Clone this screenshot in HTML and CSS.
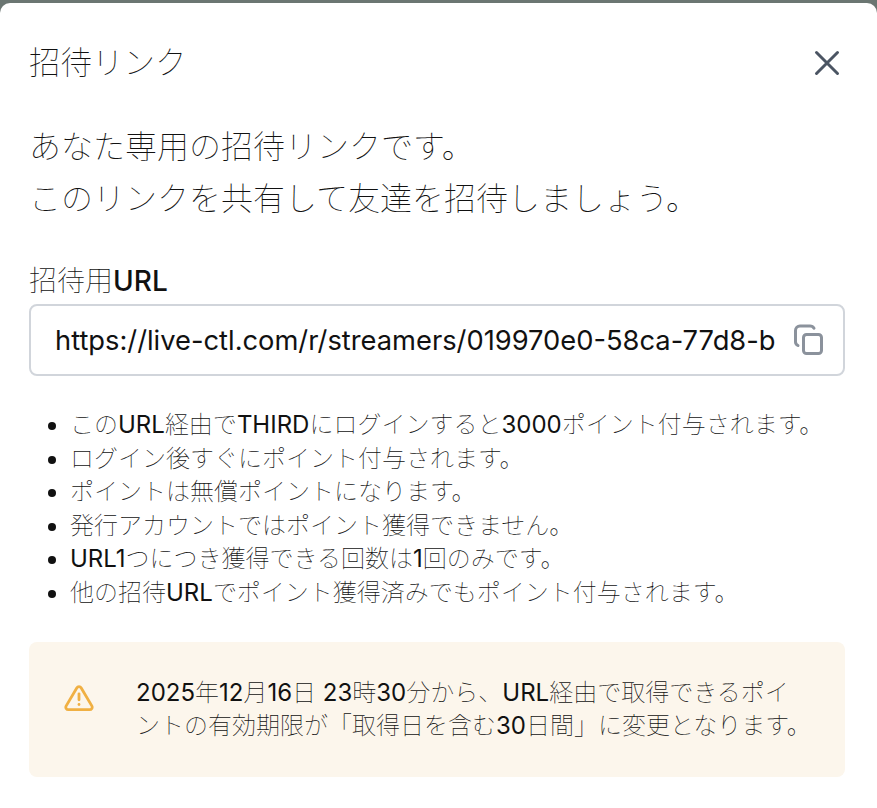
FILE: index.html
```html
<!DOCTYPE html>
<html lang="ja">
<head>
    <meta charset="UTF-8">
    <meta name="viewport" content="width=device-width, initial-scale=1.0">
    <title>招待リンク</title>
    <link rel="stylesheet" href="styles.css">
</head>
<body>
    <div class="modal">
        <div class="modal-header">
            <h2 class="modal-title">招待リンク</h2>
            <button class="close-btn" aria-label="閉じる">
                <svg width="36" height="36" viewBox="0 0 36 36" fill="none" stroke="#4b5563" stroke-width="3" stroke-linecap="round">
                    <path d="M7.500 7.500L28.500 28.500M28.500 7.500L7.500 28.500"/>
                </svg>
            </button>
        </div>
        <p class="lead">あなた専用の招待リンクです。<br>このリンクを共有して友達を招待しましょう。</p>
        <label class="url-label">招待用<span class="en-strong">URL</span></label>
        <div class="url-box">
            <span class="url-text">https://live-ctl.com/r/streamers/019970e0-58ca-77d8-b</span>
            <svg class="copy-icon" width="32" height="32" viewBox="0 0 32 32" fill="none" stroke="#8b929c" stroke-width="3" stroke-linejoin="round" stroke-linecap="round">
                <rect x="10.5" y="10.5" width="18" height="19" rx="3"/>
                <path d="M5 21.5C3.6 20.8 2.500 19.500 2.500 18V6.500C2.500 4 4.500 2 7 2H17C18.800 2 20.200 2.800 21 4.200"/>
            </svg>
        </div>
        <ul class="notes">
            <li>この<span class="en">URL</span>経由で<span class="en">THIRD</span>にログインすると<span class="en">3000</span>ポイント付与されます。</li>
            <li>ログイン後すぐにポイント付与されます。</li>
            <li>ポイントは無償ポイントになります。</li>
            <li>発行アカウントではポイント獲得できません。</li>
            <li><span class="en">URL1</span>つにつき獲得できる回数は<span class="en">1</span>回のみです。</li>
            <li>他の招待<span class="en">URL</span>でポイント獲得済みでもポイント付与されます。</li>
        </ul>
        <div class="alert">
            <svg class="alert-icon" width="30" height="26" viewBox="0 0 32 28" fill="none" stroke="#f0b043" stroke-width="3" stroke-linecap="round" stroke-linejoin="round">
                <path d="M13.600 3.200C14.700 1.300 17.300 1.300 18.400 3.200L29.800 22.500C30.900 24.400 29.600 26.500 27.400 26.500H4.600C2.400 26.500 1.100 24.400 2.200 22.500Z"/>
                <path d="M16 9.500V16"/>
                <path d="M16 21V21.100"/>
            </svg>
            <p class="alert-text"><span class="en">2025</span>年<span class="en">12</span>月<span class="en">16</span>日 <span class="en">23</span>時<span class="en">30</span>分から、<span class="en">URL</span>経由で取得できるポイ<br>ントの有効期限が「取得日を含む<span class="en">30</span>日間」に変更となります。</p>
        </div>
    </div>
</body>
</html>
```

FILE: styles.css
```css
html, body {
    height: 100%;
}
body {
    margin: 0;
    padding-top: 3px;
    box-sizing: border-box;
    overflow: hidden;
    background-color: #6b7672;
    font-family: Inter, "Noto Sans CJK JP", sans-serif;
    font-weight: 100;
    color: #111111;
}
.modal {
    height: 100%;
    box-sizing: border-box;
    padding: 0 32px 0 29px;
    background: white;
    border-radius: 10px 10px 0 0;
}
.modal-header {
    display: flex;
    align-items: center;
    justify-content: space-between;
    padding-top: 38px;
}
.modal-title {
    margin: 0;
    font-size: 31.5px;
    line-height: 44px;
    font-weight: 100;
}
.close-btn {
    display: flex;
    padding: 0;
    border: none;
    background: none;
}
.lead {
    margin: 36px 0 0;
    font-size: 32px;
    line-height: 52px;
}
.url-label {
    display: block;
    margin-top: 36px;
    font-size: 28px;
    line-height: 40px;
}
.en-strong {
    font-weight: 500;
}
.en {
    font-weight: 400;
}
.url-box {
    display: flex;
    align-items: center;
    justify-content: space-between;
    height: 72px;
    margin-top: 3px;
    padding: 0 18px 0 24px;
    box-sizing: border-box;
    border: 2px solid #d1d5db;
    border-radius: 8px;
}
.url-text {
    font-size: 27.3px;
    font-weight: 400;
    white-space: nowrap;
    overflow: hidden;
}
.copy-icon {
    flex-shrink: 0;
}
.notes {
    margin: 32px 0 0;
    padding-left: 41px;
    font-size: 24px;
    line-height: 33.6px;
}
.alert {
    display: flex;
    align-items: flex-start;
    gap: 42px;
    height: 135px;
    margin-top: 32px;
    padding: 34px 20px 0 35px;
    box-sizing: border-box;
    background: #fcf6ec;
    border-radius: 8px;
}
.alert-icon {
    flex-shrink: 0;
    margin-top: 9px;
}
.alert-text {
    margin: 0;
    font-size: 24px;
    line-height: 33.6px;
}
```
